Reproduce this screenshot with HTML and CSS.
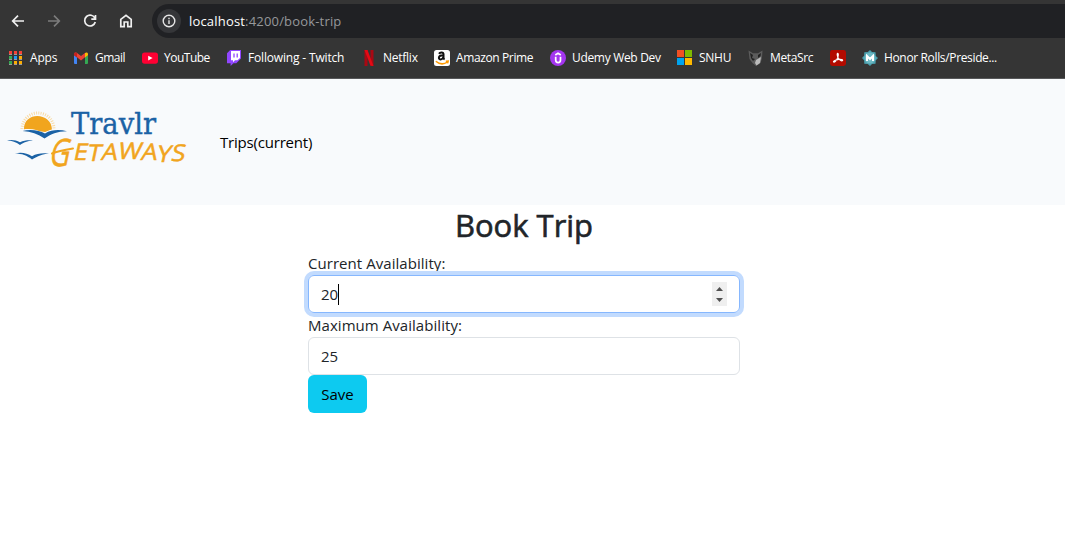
FILE: index.html
```
<!DOCTYPE html>
<html lang="en">
<head>
<meta charset="utf-8">
<title>Book Trip</title>
<link rel="stylesheet" href="styles.css">
</head>
<body>
<header class="browser">
  <div class="toolbar">
    <svg class="nav" viewBox="0 0 16 16"><path d="M14 8H3M8 2.7 2.7 8 8 13.3"/></svg>
    <svg class="nav off" viewBox="0 0 16 16"><path d="M2 8h11M8 2.7 13.3 8 8 13.3"/></svg>
    <svg class="nav" viewBox="0 0 16 16"><path d="M13 5.3A5.4 5.4 0 1 0 13.3 9M13.5 2v4.2H9.3"/></svg>
    <svg class="nav" viewBox="0 0 16 16"><path d="M2.8 6.3 8 2.3l5.2 4v7.4H9.8V9H6.2v4.7H2.8z"/></svg>
    <div class="address">
      <span class="info"><svg viewBox="0 0 14 14"><circle cx="7" cy="7" r="5.8"/><path d="M7 6.2V10M7 3.8v1.4"/></svg></span>
      <span class="url">localhost<span class="path">:4200/book-trip</span></span>
    </div>
  </div>
  <nav class="bookmarks">
    <a class="bm apps"><svg viewBox="0 0 16 16"><path fill="#f44336" d="M1 1h3v3H1zM6 1h3v3H6zM11 1h3v3h-3z"/><path fill="#34a853" d="M1 6h3v3H1zM1 11h3v3H1z"/><path fill="#2196f3" d="M6 6h3v3H6z"/><path fill="#fbac04" d="M11 6h3v3h-3zM6 11h3v3H6zM11 11h3v3h-3z"/><path fill="#9a9a9a" d="M1 4h3v1H1zM6 4h3v1H6zM11 4h3v1h-3zM1 9h3v1H1zM6 9h3v1H6zM11 9h3v1h-3zM1 14h3v1H1zM6 14h3v1H6zM11 14h3v1h-3z"/></svg><span>Apps</span></a>
    <a class="bm gmail"><svg viewBox="0 0 16 16"><path fill="#4285f4" d="M1 5l3 2.3V14H2a1 1 0 0 1-1-1z"/><path fill="#34a853" d="M12 7.3 15 5v8a1 1 0 0 1-1 1h-2z"/><path fill="#ea4335" d="M1 5V4c0-1.6 1.7-2 2.7-1.2L8 6l4.3-3.2L12 7.3 8 10.4 4 7.3z"/><path fill="#fbbc04" d="M12 3c1.3-1 3-.5 3 1v1.3l-3 2.2z"/><path fill="#c5221f" d="M1 4c0-1.6 1.8-2 3-.9v4.3L1 5.2z"/></svg><span>Gmail</span></a>
    <a class="bm youtube"><svg viewBox="0 0 16 16"><rect y="2.4" width="16" height="11.3" rx="2.6" fill="#ff0033"/><path fill="#fff" d="m6.2 5.7 4.4 2.4-4.4 2.4z"/></svg><span>YouTube</span></a>
    <a class="bm twitch"><svg viewBox="0 0 16 16"><path fill="#9146ff" d="M4.2 0H15v8.6l-4.7 4.6H7.5L4.6 16v-2.8H1V3.2z"/><path fill="#fff" d="M5 1h9v7l-2.5 2.3H9L7 12.2v-1.9H5z"/><path stroke="#9146ff" stroke-width="1.3" d="M8 3.5v4M11.2 3.5v4"/></svg><span>Following - Twitch</span></a>
    <a class="bm netflix"><svg viewBox="0 0 16 16"><path fill="#a90813" d="M3.5 0h3v16l-3 .3zM9.5 0h3v16l-3-.3z"/><path fill="#e50914" d="M3.5 0h3l6 16-3-.3z"/></svg><span>Netflix</span></a>
    <a class="bm amazon"><svg viewBox="0 0 16 16"><rect width="16" height="16" rx="2.5" fill="#fff"/><path fill="none" stroke="#111" stroke-width="2" d="M5 3.7C6 1.900 9.500 1.900 9.500 4.200v3.600c0 .8.400 1.300 1.100 1.700M9.500 5.200C6.800 5.100 4.900 5.900 4.900 7.700c0 2.400 3.400 2.200 4.500-.3"/><path fill="none" stroke="#f90" stroke-width="1.500" d="M1.800 11.200c3.800 3.300 8.200 3.200 11.700.8M11.800 11.200l2.400-.1-.6 2.300"/></svg><span>Amazon Prime</span></a>
    <a class="bm udemy"><svg viewBox="0 0 16 16"><circle cx="8" cy="8" r="8" fill="#a435f0"/><path fill="none" stroke="#fff" stroke-width="1.700" d="M5.700 6.700v3.400c0 3.400 4.800 3.400 4.800 0V6.700M5.300 5 8 3.200 10.800 5"/></svg><span>Udemy Web Dev</span></a>
    <a class="bm snhu"><svg viewBox="0 0 16 16"><path fill="#f25022" d="M0 0h7v7H0z"/><path fill="#7fba00" d="M8 0h7v7H8z"/><path fill="#00a4ef" d="M0 8h7v7H0z"/><path fill="#ffb900" d="M8 8h7v7H8z"/></svg><span>SNHU</span></a>
    <a class="bm meta"><svg viewBox="0 0 16 16"><path fill="#5c5c5c" d="M.5.5 5 3.200h5L14.500.5 14 8l-1.500 5L8 16l-3.500-3L1.500 9z"/><path fill="#222" d="m2 3 3 2-1 3 3 1-2 2-2-3zM10 5l3-2-.5 3L10 8z"/><path fill="#bbb" d="m8 10 5-3-1 6-3.500 2.500L7 13z"/></svg><span>MetaSrc</span></a>
    <a class="bm adobe"><svg viewBox="0 0 16 16"><rect width="16" height="16" rx="2.400" fill="#b30b00"/><path fill="none" stroke="#fff" stroke-width="1.200" d="M7.500 3.400c1.200-.2.800 2.400.3 4C7 9.600 5.200 12.600 3.700 12c-1-.7 2.300-2.400 5-2.700 2.300-.2 4.500.3 3.800 1.300-1 .8-3.700-1.300-4.500-3.100-.6-1.600-1-3.800-.5-4.100z"/></svg></a>
    <a class="bm honor"><svg viewBox="0 0 16 16"><path fill="#4c9fad" d="m8 0 2 2.100L13.500 2.300 13.800 6 16 8l-2.200 2.200-.3 3.500-3.500.3L8 16l-2.200-2-3.500-.3-.2-3.500L0 8l2.100-2.200.2-3.500 3.500-.2z"/><circle cx="8" cy="8" r="5.500" fill="#6bb7c2"/><path fill="none" stroke="#fff" stroke-width="2" d="M5 11V6l3 3 3-3v5"/></svg><span>Honor Rolls/Preside...</span></a>
  </nav>
</header>
<div class="navbar">
  <svg class="logo" viewBox="0 0 200 80">
    <path fill="none" stroke="#f9dba6" stroke-width="3" stroke-dasharray="1 1.300" d="M22 29a16 16 0 1 1 32 0"/>
    <path fill="#f1a51e" d="M24 30c-1-19 28-18 28 0l-7 2-7-1z"/>
    <path fill="#f8fafc" d="M23 29.500c8-1.500 16 .5 21 4 4-3 7-4.200 10-4.500v7H23z"/>
    <g fill="#1b62a5"><path d="M22.500 31c8-2.300 17-.6 22.500 2.500 7-4.300 15-4 22-2.300-10 0-16 3-22.500 7.300C38 34 31 31.500 22.500 31z"/><path d="M7 40.500c5-1 9-.2 13 1.800 4-1.800 8-2.200 13-1.800-6 .5-9 2-13 4.500-4-3-8-4.300-13-4.500z"/><path d="M15 53.500c6-1.700 12-.5 17 2.700 5-2.800 10-3.400 17-2.700-7 .5-11 2.500-17 6-5-4-10-6-17-6z"/></g>
    <text class="travlr" x="71" y="34" textLength="85" lengthAdjust="spacingAndGlyphs">Travlr</text>
    <g class="getaways" transform="translate(0 62) skewX(-12)"><text class="big" x="49" y="4" textLength="20" lengthAdjust="spacingAndGlyphs">G</text><text x="72" y="-2" textLength="112" lengthAdjust="spacingAndGlyphs">E<tspan dy="1">T</tspan><tspan dy="-1">A</tspan><tspan dy="-1">W</tspan><tspan dy="1">A</tspan><tspan dy="2">Y</tspan><tspan dy="-1">S</tspan></text></g>
    <path fill="none" stroke="#f1a51e" stroke-width="2" stroke-linecap="round" d="M52 53.500c6-2.500 12-3.500 21-5"/>
  </svg>
  <a class="trips">Trips(current)</a>
</div>
<main class="page">
  <h1><span>Book Trip</span></h1>
  <form class="form">
    <label class="current">Current Availability:</label>
    <div class="field focus"><span>20</span><i class="caret"></i><svg class="spin" viewBox="0 0 15 24"><path fill="#505050" d="M4 9h7L7.500 5zM4 16h7l-3.500 4z"/></svg></div>
    <label class="maximum">Maximum Availability:</label>
    <div class="field"><span>25</span></div>
    <button type="button" class="save">Save</button>
  </form>
</main>
</body>
</html>
```
FILE: styles.css
```
* { box-sizing: border-box; }
body { margin: 0; background: #fff; color: #212529; font: 15px/24px "Open Sans", "Noto Sans", sans-serif; height: 542px; overflow: hidden; }
svg { display: block; flex: none; }
.browser { height: 79px; background: #353535; border-bottom: 1px solid #57585a; }
.toolbar { height: 42px; padding-left: 10px; display: flex; align-items: center; gap: 20px; }
.nav { width: 16px; height: 16px; fill: none; stroke: #f0f0f0; stroke-width: 1.7; }
.off { stroke: #7c7c7c; }
.address { flex: 1; height: 34px; margin-left: -2px; border-radius: 17px 0 0 17px; background: #202124; display: flex; align-items: center; padding-left: 5px; }
.info { width: 24px; height: 24px; border-radius: 50%; background: #353639; display: flex; align-items: center; justify-content: center; }
.info svg { width: 14px; height: 14px; fill: none; stroke: #e6e6e6; stroke-width: 1.4; }
.url { margin-left: 8px; color: #fff; font-size: 13px; letter-spacing: .18px; white-space: nowrap; }
.path { color: #96989b; }
.bookmarks { height: 36px; padding: 0 0 4px 8px; display: flex; align-items: center; }
.bm { display: flex; align-items: center; gap: 6px; color: #fff; font-size: 12px; letter-spacing: -.25px; white-space: nowrap; flex: none; }
.bm svg { width: 16px; height: 16px; }
.apps { width: 65px; letter-spacing: -.2px; }
.gmail { width: 69px; letter-spacing: -.5px; }
.youtube { width: 84px; letter-spacing: -.5px; }
.twitch { width: 135px; letter-spacing: -.17px; }
.netflix { width: 73px; }
.amazon { width: 116px; letter-spacing: -.38px; }
.udemy { width: 127px; letter-spacing: -.32px; }
.snhu { width: 71px; }
.meta { width: 82px; letter-spacing: -.35px; }
.adobe { width: 32px; }
.honor { letter-spacing: -.35px; }
.navbar { height: 126px; background: #f8fafc; display: flex; align-items: center; }
.logo { width: 200px; height: 80px; margin-top: -4px; }
.travlr { font: 29px "DejaVu Serif", serif; fill: #1b62a5; stroke: #1b62a5; stroke-width: .4px; }
.getaways { font: 500 23px "Open Sans", sans-serif; fill: #f1a51e; stroke: #f1a51e; stroke-width: .5px; stroke-linejoin: round; }
.big { font-size: 38px; }
.trips { margin-left: 20px; color: #000; letter-spacing: -.2px; }
.page { width: 432px; margin-left: 308px; }
h1 { margin: 0 0 8px; height: 38px; font-size: 31px; line-height: 40px; font-weight: 500; text-align: center; -webkit-text-stroke: .6px #212529; }
.form { display: flex; flex-direction: column; align-items: stretch; }
label { height: 24px; letter-spacing: .05px; }
.field { height: 38px; padding: 0 12px; border: 1px solid #dee2e6; border-radius: 6px; display: flex; align-items: center; }
.focus { border-color: #86b7fe; box-shadow: 0 0 0 4px #c2dbfe; }
.caret { width: 1px; height: 21px; background: #000; }
.spin { width: 15px; height: 24px; margin-left: auto; background: #efefef; }
.save { width: 59px; height: 38px; border: 0; border-radius: 6px; background: #0dcaf0; color: #000; font: inherit; padding: 0; }
```
